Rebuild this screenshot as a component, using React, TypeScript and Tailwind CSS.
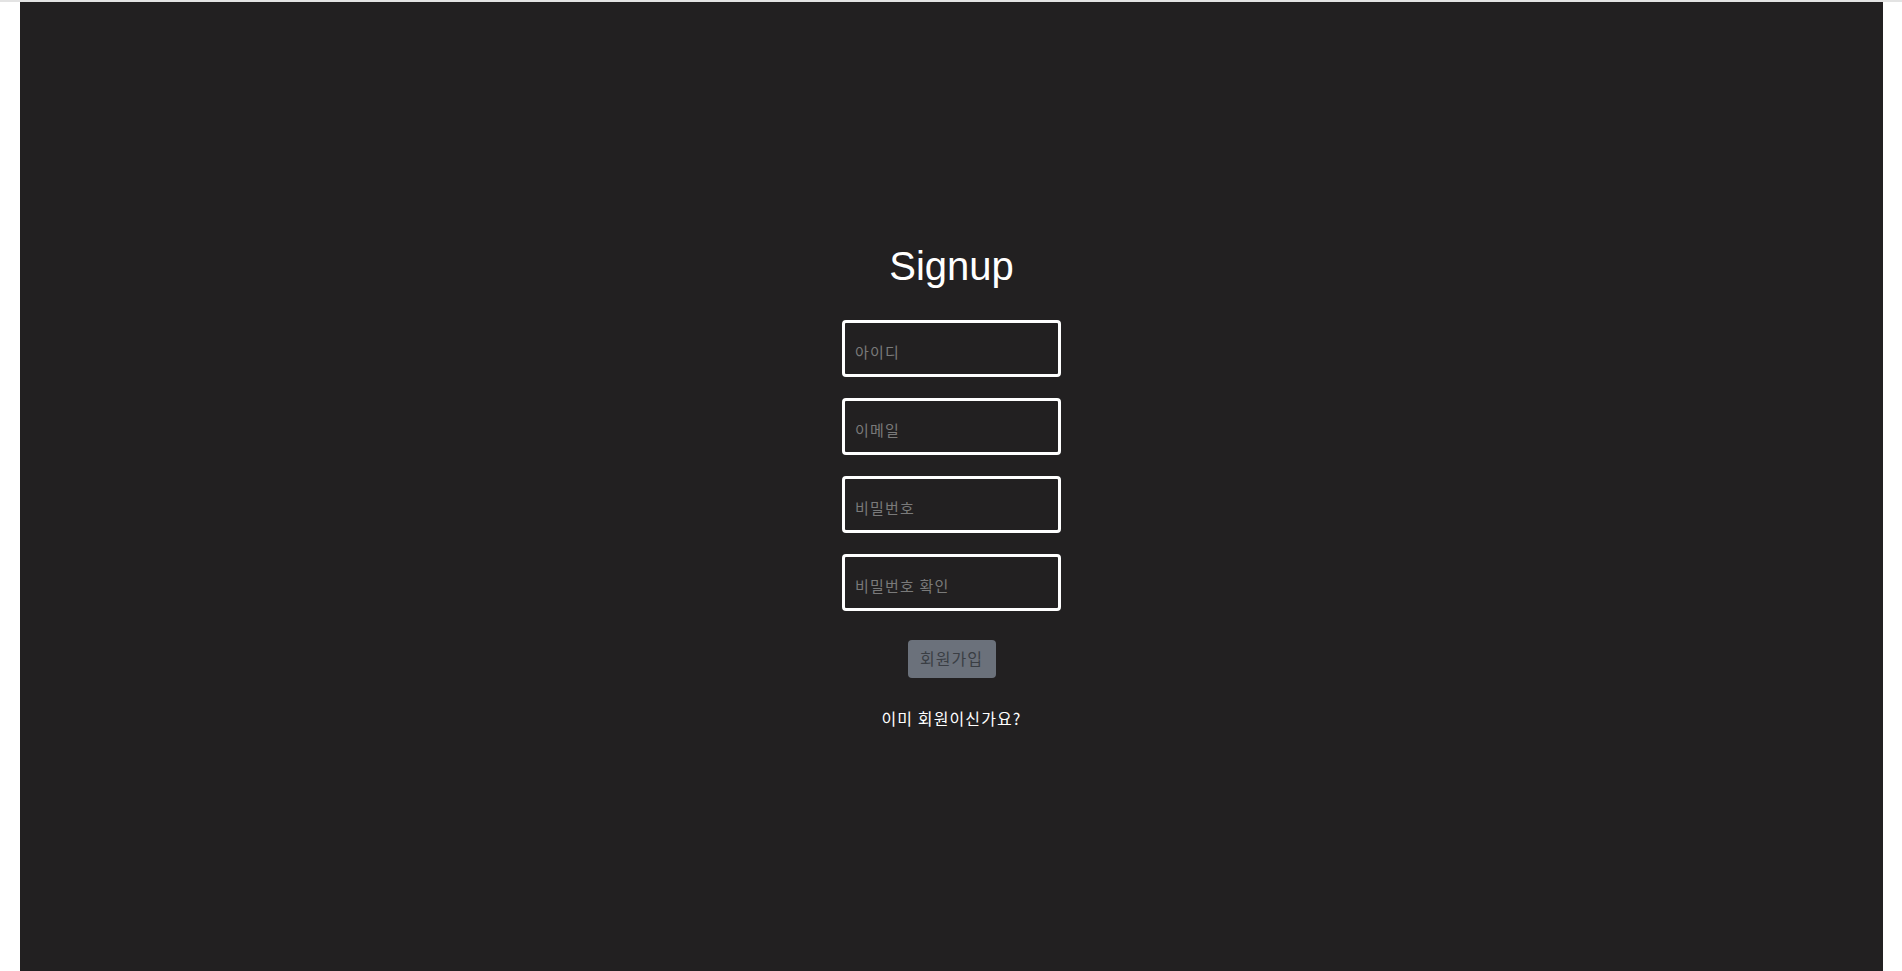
import { useState } from "react";

const fields = [
  { name: "username", type: "text", placeholder: "아이디" },
  { name: "email", type: "email", placeholder: "이메일" },
  { name: "password", type: "password", placeholder: "비밀번호" },
  { name: "passwordConfirm", type: "password", placeholder: "비밀번호 확인" },
];

export default function App() {
  const [values, setValues] = useState<Record<string, string>>({});

  return (
    <div className="min-h-screen bg-white flex flex-col">
      <div className="h-[2px] bg-[#e3e3e3]" />
      <div className="flex-1 flex pl-[20px] pr-[19px]">
        <div className="flex-1 bg-[#222021] flex flex-col items-center justify-center font-['Noto_Sans_CJK_KR',sans-serif]">
          <h1 className="text-[40px] leading-[46px] text-white font-['Liberation_Sans',Arial,sans-serif] mb-[31px]">
            Signup
          </h1>
          <form
            className="flex flex-col items-center"
            onSubmit={(e) => e.preventDefault()}
          >
            <div className="flex flex-col gap-[21px]">
              {fields.map((f) => (
                <input
                  key={f.name}
                  type={f.type}
                  placeholder={f.placeholder}
                  value={values[f.name] || ""}
                  onChange={(e) =>
                    setValues((v) => ({ ...v, [f.name]: e.target.value }))
                  }
                  className="w-[219px] h-[57px] border-[3px] border-white rounded-[4px] bg-transparent pl-[10px] pr-[10px] pt-[6px] text-[15px] tracking-[1.2px] text-white placeholder:text-[#7a7a7a] outline-none"
                />
              ))}
            </div>
            <button
              type="submit"
              disabled
              className="mt-[29px] w-[88px] h-[38px] pb-[2px] rounded-[4px] bg-[#6b717b] text-[16px] tracking-[1px] text-[#3a3e44]"
            >
              회원가입
            </button>
          </form>
          <a
            href="#"
            className="mt-[28px] text-[16px] leading-[24px] tracking-[1.1px] text-white"
          >
            이미 회원이신가요?
          </a>
        </div>
      </div>
    </div>
  );
}
